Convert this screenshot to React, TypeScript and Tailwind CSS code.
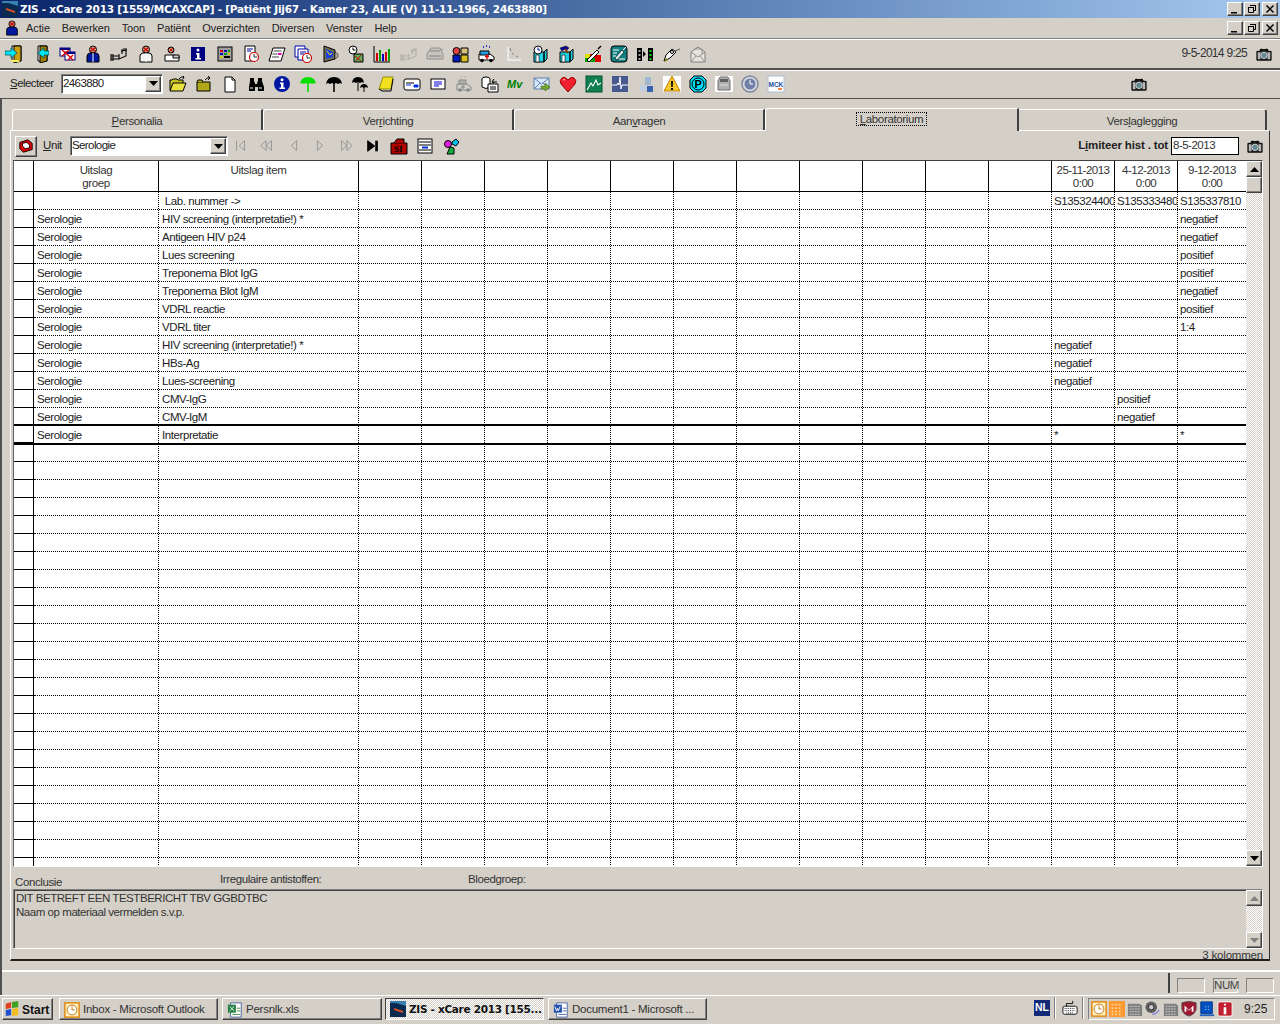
import React from "react";

const raised = "border border-t-white border-l-white border-b-[#404040] border-r-[#404040] shadow-[inset_-1px_-1px_0_#808080]";
const sunken = "border border-t-[#808080] border-l-[#808080] border-b-white border-r-white shadow-[inset_1px_1px_0_#404040]";
const dither = "bg-[conic-gradient(#ffffff_25%,#d4d0c8_0_50%,#ffffff_0_75%,#d4d0c8_0)] bg-[length:2px_2px]";

function S({ children, size = 18 }: { children: React.ReactNode; size?: number }) {
  return (
    <svg width={size} height={size} viewBox="0 0 18 18" className="block shrink-0">
      {children}
    </svg>
  );
}

const Door = ({ flip }: { flip?: boolean }) => (
  <S>
    <path d="M7 1h9v15H7z" fill="#fff" stroke="#000" />
    <path d="M9 1h7v15l-7 2z" fill={flip ? "#a08000" : "#c8a010"} stroke="#000" />
    <path d={flip ? "M18 6h-5V3L7 8l6 5v-3h5z" : "M0 6h6V3l6 5-6 5v-3H0z"} fill="#00e8f8" stroke="#004050" strokeWidth="0.7" />
    {!flip && <path d="M5 15h8l2 2H7z" fill="#f0f060" />}
  </S>
);
const Bed = ({ color = "#000" }: { color?: string }) => (
  <S>
    <path d="M1 9v7M3 9v7M1 11h8M1 14h8M9 9v5L16 11V5l-4 1v3" fill="none" stroke={color} strokeWidth="1.1" />
    <path d="M12 4v3M14 3v3M16 3v3" stroke={color} />
  </S>
);
const Person = ({ body, x }: { body: string; x?: boolean }) => (
  <S>
    <circle cx="9" cy="4.5" r="3.5" fill="#c0a080" stroke="#000" />
    {x && <path d="M6.5 2.5l5 4M11.5 2.5l-5 4" stroke="#d00000" strokeWidth="1.2" />}
    <path d="M3 17V11q0-2.500 3-3h6q3 .5 3 3v6z" fill={body} stroke="#000" />
    <path d="M9 8v9" stroke="#fff" />
  </S>
);
const Clock = ({ cx, cy, r }: { cx: number; cy: number; r: number }) => (
  <g>
    <circle cx={cx} cy={cy} r={r} fill="#fff" stroke="#d00000" strokeWidth="1.2" />
    <path d={`M${cx} ${cy - r + 1.5}V${cy}h${r - 1.5}`} fill="none" stroke="#000" strokeWidth="0.8" />
  </g>
);
const Box = ({ children }: { children: React.ReactNode }) => (
  <S>
    <path d="M3 7h10v10H3zM13 7l3-3v10l-3 3z" fill="#20d0e0" stroke="#000" />
    <path d="M5 10h3v7H5z" fill="#fff" stroke="#000" strokeWidth="0.6" />
    {children}
  </S>
);
const Umbrella = ({ color }: { color: string }) => (
  <S>
    <path d="M1 9q1-7 8-7t8 7l-2-1-2 1-2-1-2 1-2-1-2 1-2-1z" fill={color} />
    <path d="M9 8v9" stroke={color} strokeWidth="1.6" />
  </S>
);
const Cam = () => (
  <S size={16}>
    <path d="M1 6h3l1-2h8l1 2h3v10H1z" fill="#222" stroke="#000" />
    <path d="M5 3h2v2H5zM11 3h2v2h-2z" fill="#000" />
    <path d="M2 7h3v8H2zM13 7h3v8h-3z" fill="#b8b8b8" />
    <circle cx="9" cy="10.500" r="3.600" fill="#608890" stroke="#ddd" />
  </S>
);

const tools1: React.ReactNode[] = [
  <Door />,
  <Door flip />,
  <S><rect x="2" y="3" width="10" height="8" fill="#fff" stroke="#000080" /><rect x="2" y="3" width="10" height="2" fill="#000080" /><rect x="7" y="7" width="10" height="8" fill="#fff" stroke="#000080" /><rect x="7" y="7" width="10" height="2" fill="#000080" /><path d="M4 5l7 6M11 5l-7 6M10 10l5 5M15 10l-5 5" stroke="#e00000" strokeWidth="1.3" /></S>,
  <Person body="#0018a0" x />,
  <Bed />,
  <Person body="#f4f4f4" x />,
  <S><path d="M2 10v6h14v-5l-6-1z" fill="#fff" stroke="#000" /><circle cx="8" cy="5" r="3" fill="#c0a080" stroke="#000" /><path d="M6 3l4 4M10 3l-4 4" stroke="#d00000" /><path d="M10 10h6v3h-6z" fill="#ccc" stroke="#000" /></S>,
  <S><rect x="2" y="2" width="14" height="14" fill="#000080" /><circle cx="9" cy="5" r="1.500" fill="#fff" /><path d="M7 8h3.500v5H12v1.500H6.500V13H8V9.500H7z" fill="#fff" /></S>,
  <S><rect x="2" y="2" width="14" height="14" fill="#a0a0a0" stroke="#000" /><path d="M4 5h3v2H4z" fill="#d00000" /><path d="M8 5h3v2H8zM4 8h3v2H4z" fill="#0000c0" /><path d="M12 5h2v2h-2zM8 8h3v2H8z" fill="#00a000" /><path d="M12 8h2v2h-2zM4 11h3v2H4z" fill="#d0d000" /><path d="M8 11h6v2H8z" fill="#000" /></S>,
  <S><path d="M3 1h10v15H3z" fill="#fff" stroke="#000" /><path d="M5 4h6M5 6h4" stroke="#0000a0" /><Clock cx={12} cy={12} r={4.500} /></S>,
  <S><path d="M5 3h12l-4 13H1z" fill="#fff" stroke="#000" /><path d="M5.500 6h8M4.500 9h5M4 12h7" stroke="#444" /><path d="M10 8h4l-1 2h-3z" fill="#e000c0" /></S>,
  <S><path d="M1 1h10v11H1z" fill="#fff" stroke="#0000a0" /><path d="M4 4h10v11H4z" fill="#fff" stroke="#0000a0" /><path d="M6 7h6M6 9h4" stroke="#0000a0" /><Clock cx={13} cy={13} r={4.500} /></S>,
  <S><path d="M3 1l11 4v9L3 17z" fill="#707050" stroke="#000" /><path d="M5 4l7 3v5l-7 2z" fill="#2040e0" /><path d="M6 6l3 4 2-2" stroke="#f0e000" fill="none" /><path d="M14 7l3 2v3l-3 2z" fill="#aaa" stroke="#000" strokeWidth="0.5" /></S>,
  <S><circle cx="6" cy="5" r="4" fill="#fff" stroke="#000" /><path d="M6 2.500V5h2.500" stroke="#000" fill="none" /><path d="M7 9h9v8H7z" fill="#60b060" stroke="#000" /><path d="M8 11l6 5M14 10l-5 6" stroke="#d00000" /></S>,
  <S><path d="M1 1v16h16" stroke="#000" fill="none" /><path d="M3 8h2v8H3z" fill="#d00000" /><path d="M6 5h2v11H6z" fill="#00a000" /><path d="M9 9h2v7H9z" fill="#0000c0" /><path d="M12 7h2v9h-2z" fill="#d00000" /><path d="M15 4h2v12h-2z" fill="#00a000" /></S>,
  <Bed color="#b0b0a8" />,
  <S><path d="M1 9l4-6h9l3 6v5H1z" fill="#c8c4bc" stroke="#909090" /><path d="M4 6h10M3 11h12" stroke="#808080" /><path d="M15 5l2-1" stroke="#909090" /></S>,
  <S><path d="M1 10h7v7H1z" fill="#0018c0" stroke="#000" /><circle cx="4.500" cy="6" r="3.500" fill="#e04040" stroke="#000" /><path d="M9 10h7v7H9z" fill="#d8c020" stroke="#000" /><path d="M9 3h7v6H9z" fill="#d8c080" stroke="#000" /></S>,
  <S><path d="M1 9h11l4 3v3H1z" fill="#fff" stroke="#000" /><path d="M2 6h9v4H2z" fill="#20a0e0" stroke="#000" /><path d="M9 9v5M7 11.500h4" stroke="#e00000" strokeWidth="1.4" /><circle cx="4" cy="15.500" r="1.800" /><circle cx="13" cy="15.500" r="1.800" /><path d="M5 2h1M8 1h1M11 2h1" stroke="#0000c0" strokeWidth="1.500" /></S>,
  <S><path d="M3 2v13h13" stroke="#fff" fill="none" /><path d="M5 3l1 3M7 8l2 2M11 11l2 1" stroke="#808080" /></S>,
  <Box><circle cx="7" cy="5" r="4" fill="#fff" stroke="#000" /><path d="M7 2.500V5h2" stroke="#00a" fill="none" /></Box>,
  <Box><path d="M3 3l6-2 3 2-2 2-2-1-3 2z" fill="#0000a0" stroke="#000" strokeWidth="0.5" /><path d="M8 4l3 4" stroke="#804000" strokeWidth="2" /></Box>,
  <S><path d="M1 9h5v8H1z" fill="#e0e000" /><path d="M6 9h6v4H6z" fill="#e00000" /><path d="M1 13h10v4H1z" fill="#00a000" /><path d="M11 10h6v7h-6z" fill="#e00000" /><path d="M3 15L13 5l2 2L5 17z" fill="#fff" stroke="#000" /><path d="M14 4l3-3" stroke="#000" strokeWidth="1.500" /></S>,
  <S><rect x="1" y="1" width="16" height="16" rx="3" fill="#108080" stroke="#000" /><path d="M3 5h6M3 8h4M3 11h3M9 14h6" stroke="#fff" /><path d="M5 13l7-8 2 2-7 8z" fill="#e0f0f0" stroke="#000" strokeWidth="0.6" /><path d="M13 5l3-3" stroke="#fff" /></S>,
  <S><rect x="1" y="3" width="5" height="13" fill="#000" /><path d="M2.500 5h2v2h-2zM2.500 9h2v2h-2zM2.500 13h2v2h-2z" fill="#a0a0a0" /><path d="M7 6l3 3-3 3z" fill="#000" /><rect x="12" y="3" width="5" height="13" fill="#000" /><path d="M13.500 5h2v2h-2zM13.500 9h2v2h-2zM13.500 13h2v2h-2z" fill="#00e000" /></S>,
  <S><path d="M1 16l2-6 6-6 4 3-6 6z" fill="#fff" stroke="#000" /><path d="M1 17l2-4 2 2z" fill="#808000" /><circle cx="9" cy="7" r="1.500" fill="none" stroke="#000" /><path d="M12 6l5-2" stroke="#555" /></S>,
  <S><path d="M2 7l7-5 7 5v10H2z" fill="#e8e4dc" stroke="#808080" /><path d="M2 7l7 5 7-5M2 17l5-6M16 17l-5-6M5 4h8v5" fill="none" stroke="#909090" /></S>,
];

const tools2: React.ReactNode[] = [
  <S><path d="M1 15V5h2l1-1h4l1 1h5v3" fill="#c0c020" stroke="#000" /><path d="M1 16l3-8h13l-3 8z" fill="#e8e040" stroke="#000" /><path d="M10 4q2-3 5-2l-1-1M15 2l-1 2" stroke="#000" fill="none" /></S>,
  <S><path d="M2 7h13v9H2z" fill="#b0a818" stroke="#000" /><path d="M2 7l1-2h4l1 2" fill="#b0a818" stroke="#000" /><path d="M10 5q2-3 5-2M13 1l2 2-2 2" stroke="#000" fill="none" /></S>,
  <S><path d="M4 2h7l3 3v12H4z" fill="#fff" stroke="#000" /><path d="M11 2v3h3" fill="none" stroke="#000" /></S>,
  <S><path d="M3 3h4v3l1 2v1h2V8l1-2V3h4v3l2 6v4h-6v-4H8v4H2v-4l1-6z" fill="#000" /><path d="M3 13h3M12 13h3" stroke="#fff" /></S>,
  <S><circle cx="9" cy="9" r="8" fill="#0018a0" /><circle cx="9" cy="4.800" r="1.500" fill="#fff" /><path d="M7 7.500h3.500v5H12V14H6.500v-1.500H8v-3.500H7z" fill="#fff" /></S>,
  <Umbrella color="#00e000" />,
  <Umbrella color="#000" />,
  <S><path d="M1 8q.5-6 6-6t6 6l-2-1-2 1-2-1-2 1-2-1z" fill="#000" /><path d="M7 7v9" stroke="#000" /><path d="M9 13q.5-4 4-4t4 4l-2-1-2 1-2-1z" fill="#000" /><path d="M13 12v5" stroke="#000" /></S>,
  <S><path d="M6 2h10l-2 12H2z" fill="#f0e020" stroke="#909000" /><path d="M2 14l3 2h9l2-12" fill="none" stroke="#000" /></S>,
  <S><rect x="1" y="4" width="16" height="11" rx="2" fill="#fff" stroke="#000" /><path d="M3 8h8" stroke="#000" /><path d="M11 10h4v2h-4zM3 10h5" stroke="#0030e0" fill="#0030e0" /></S>,
  <S><rect x="2" y="4" width="14" height="10" fill="#fff" stroke="#000" /><path d="M5 7h8M5 9h8M5 11h5" stroke="#0000d0" /></S>,
  <S><path d="M2 9h10l4 3v3H2z" fill="#d0d0c8" stroke="#888" /><path d="M4 5h7v4H4z" fill="#b0b0a8" stroke="#888" /><path d="M8 10v4M6 12h4" stroke="#888" /><circle cx="5" cy="15" r="1.800" fill="#888" /><circle cx="13" cy="15" r="1.800" fill="#888" /><path d="M6 2h1M10 2h1" stroke="#888" /></S>,
  <S><ellipse cx="5" cy="4" rx="4" ry="2" fill="#fff" stroke="#000" /><path d="M1 4v8q4 3 8 0V4" fill="#fff" stroke="#000" /><path d="M7 9h10v8H7z" fill="#fff" stroke="#000" /><path d="M9 12h6M9 14h6" stroke="#000" /><path d="M11 7h5M13 4l-2 3 2 1" stroke="#000" fill="none" /></S>,
  <S><text x="0" y="13" fontFamily="Liberation Sans, sans-serif" fontSize="11" fontWeight="700" fontStyle="italic" fill="#008000">Mv</text></S>,
  <S><path d="M1 3h15v11H1z" fill="#d8e8f8" stroke="#6080b0" /><path d="M1 3l7.500 6L16 3M1 14l6-6M16 14l-6-6" fill="none" stroke="#6080b0" /><path d="M8 11h4V8l5 4-5 4v-2H8z" fill="#70a830" stroke="#406018" strokeWidth="0.5" /></S>,
  <S><path d="M9 17L2 9q-2-4 1-6 3-2 6 2 3-4 6-2 3 2 1 6z" fill="#f02030" stroke="#a00000" /><path d="M4 5q1-1 2 0" stroke="#ffc0c0" fill="none" /></S>,
  <S><rect x="1" y="1" width="16" height="16" fill="#108050" stroke="#005030" /><path d="M2 15l4-7 2 3 3-6 2 5 3-2" fill="none" stroke="#fff" strokeWidth="1.100" /></S>,
  <S><rect x="1" y="1" width="16" height="16" fill="#485890" /><path d="M1 10h5l1-2 1 2 1-8 1 12 1-4h6" fill="none" stroke="#fff" /></S>,
  <S><path d="M3 10h6v6H3z" fill="#c0d0e0" /><path d="M8 2h6v8H8z" fill="#a0b8d0" /><path d="M10 11h6v6h-6z" fill="#3860b0" /></S>,
  <S><rect x="0" y="1" width="18" height="16" fill="#fff" /><path d="M9 1l8 15H1z" fill="#f8c830" stroke="#c08000" /><path d="M8 6h2l-.3 6H8.300zM8 13h2v2H8z" fill="#000" /></S>,
  <S><path d="M5 1h8l4 4v8l-4 4H5l-4-4V5z" fill="#00e0f8" stroke="#000" /><circle cx="9" cy="9" r="6" fill="#00e0f8" stroke="#000" /><text x="5.500" y="13" fontFamily="Liberation Sans, sans-serif" fontSize="11" fontWeight="700" fill="#000">P</text></S>,
  <S><rect x="0" y="1" width="18" height="16" fill="#fff" /><path d="M3 6l2-4h8l2 4v9H3z" fill="#b0b0b0" stroke="#707070" /><path d="M5 4h8v3H5z" fill="#606060" /><path d="M5 10h8" stroke="#e0e0e0" /></S>,
  <S><circle cx="9" cy="9" r="8" fill="#d8d8e0" stroke="#8088a0" strokeWidth="1.500" /><circle cx="9" cy="9" r="5.500" fill="#7080a8" /><path d="M9 5v4h3" stroke="#fff" fill="none" /></S>,
  <S><rect x="1" y="1" width="16" height="16" fill="#fff" stroke="#b0c0d8" /><text x="1.500" y="12" fontFamily="Liberation Sans, sans-serif" fontSize="6.500" fontWeight="700" fill="#2050a0">MCK</text><path d="M11 14h4" stroke="#f06000" strokeWidth="1.500" /></S>,
];

const navIcons: React.ReactNode[] = [
  <S size={16}><path d="M4 3v11M13 3L7 8.500l6 5.500z" fill="none" stroke="#909090" /></S>,
  <S size={16}><path d="M8 3L2 8.500 8 14zM14 3L8 8.500l6 5.500z" fill="none" stroke="#909090" /></S>,
  <S size={16}><path d="M12 3L6 8.500l6 5.500z" fill="none" stroke="#909090" /></S>,
  <S size={16}><path d="M6 3l6 5.500L6 14z" fill="none" stroke="#909090" /></S>,
  <S size={16}><path d="M4 3l6 5.500L4 14zM10 3l6 5.500-6 5.500z" fill="none" stroke="#909090" /></S>,
  <S size={16}><path d="M3 3l8 6-8 6z" fill="#000" stroke="#000" /><path d="M13 3v12" stroke="#000" strokeWidth="3" /></S>,
  <S><path d="M1 6h16v11H1z" fill="#b00000" stroke="#000" /><path d="M4 6l3-4h7v4" fill="#b00000" stroke="#000" /><text x="4" y="15" fontFamily="Liberation Serif, serif" fontSize="9" fontWeight="700" fill="#000">SI</text></S>,
  <S><rect x="2" y="2" width="14" height="14" fill="#fff" stroke="#000" /><path d="M3 5h12M3 8h12M3 13h12" stroke="#000" /><path d="M6 10.500h6" stroke="#0030e0" strokeWidth="2" /></S>,
  <S><circle cx="5" cy="7" r="3.500" fill="#e020e0" stroke="#000" /><path d="M9 5l4-3 3 3-3 4-4-2z" fill="#00c0f0" stroke="#000" /><path d="M7 10l4 1v6H4z" fill="#10b040" stroke="#000" /></S>,
];

const tray: React.ReactNode[] = [
  <S size={16}><rect x="1" y="1" width="16" height="16" fill="#fff0c0" stroke="#e08000" strokeWidth="1.500" /><circle cx="9" cy="9" r="5.500" fill="#fff" stroke="#c07000" /><path d="M9 5v4h3" stroke="#c07000" fill="none" /></S>,
  <S size={16}><rect x="0" y="0" width="18" height="18" fill="#ff9a30" /><path d="M3 4h12M3 8h12M3 12h12M3 15h12" stroke="#ffd090" strokeDasharray="2 2" strokeWidth="2" /></S>,
  <S size={16}><path d="M1 3h13l3 2v12H1z" fill="#808080" /><path d="M3 6h11M3 9h11M3 12h11M3 15h11" stroke="#d0d0d0" strokeDasharray="2 1" /></S>,
  <S size={16}><circle cx="7" cy="7" r="6.500" fill="#606060" /><circle cx="7" cy="7" r="3" fill="#d0d0d0" stroke="#222" /><path d="M8 15q5 0 8-5" stroke="#8888e0" fill="none" strokeWidth="1.500" /></S>,
  <S size={16}><path d="M1 3h13l3 2v12H1z" fill="#808080" /><path d="M3 6h11M3 9h11M3 12h11M3 15h11" stroke="#d0d0d0" strokeDasharray="2 1" /></S>,
  <S size={16}><path d="M1 2q8-3 16 0v7q-1 6-8 8-7-2-8-8z" fill="#a01830" stroke="#505050" /><path d="M4 12V5l5 5 5-5v7h-2V8l-3 3-3-3v4z" fill="#fff" /></S>,
  <S size={16}><path d="M2 1h13v13H2z" fill="#0050c0" stroke="#003080" /><path d="M1 15h16v2H1z" fill="#2060c0" /><path d="M7 6h1v1H7zM10 6h1v1h-1zM7 9h1v1H7zM10 9h1v1h-1z" fill="#a0e0ff" /></S>,
  <S size={16}><rect x="1" y="1" width="16" height="16" rx="2" fill="#c02030" stroke="#fff" /><path d="M8 3h2v2H8zM7.500 7h3v8h-3z" fill="#fff" /></S>,
];

const Tb = ({ kind }: { kind: "min" | "res" | "x" }) => (
  <div className={`w-4 h-[14px] bg-[#d4d0c8] ${raised} flex items-center justify-center`}>
    <svg width="10" height="10" viewBox="0 0 10 10">
      {kind === "min" && <path d="M1 8h6v1.500H1z" fill="#000" />}
      {kind === "res" && <path d="M3.500 1.500h5v5h-2M1.500 3.500h5v5h-5zM3 1.500h6M1 3.500h6" fill="none" stroke="#000" />}
      {kind === "x" && <path d="M1.500 1.500l7 7M8.500 1.500l-7 7" stroke="#000" strokeWidth="1.500" />}
    </svg>
  </div>
);

const WinBtns = () => (
  <div className="flex items-center">
    <Tb kind="min" />
    <div className="ml-[1px]"><Tb kind="res" /></div>
    <div className="ml-[2px]"><Tb kind="x" /></div>
  </div>
);

const Arrow = ({ down, grey }: { down?: boolean; grey?: boolean }) => (
  <svg width="9" height="5" viewBox="0 0 9 5">
    <path d={down ? "M0 0h9L4.500 5z" : "M0 5h9L4.500 0z"} fill={grey ? "#808080" : "#000"} />
  </svg>
);

const Combo = ({ value, w }: { value: string; w: string }) => (
  <div className={`${w} h-[20px] bg-white ${sunken} flex items-center pl-[1px] text-[11.5px] tracking-[-0.6px] text-[#222]`}>
    <span className="flex-1">{value}</span>
    <div className={`w-4 h-4 mr-[1px] bg-[#d4d0c8] ${raised} flex items-center justify-center`}>
      <Arrow down />
    </div>
  </div>
);

const colHead = [
  ["25-11-2013", "0:00"],
  ["4-12-2013", "0:00"],
  ["9-12-2013", "0:00"],
];

type R = [string, string, string, string, string];
const data: R[] = [
  ["", "\u00a0Lab. nummer ->", "S135324400", "S135333480", "S135337810"],
  ["Serologie", "HIV screening (interpretatie!) *", "", "", "negatief"],
  ["Serologie", "Antigeen HIV p24", "", "", "negatief"],
  ["Serologie", "Lues screening", "", "", "positief"],
  ["Serologie", "Treponema Blot IgG", "", "", "positief"],
  ["Serologie", "Treponema Blot IgM", "", "", "negatief"],
  ["Serologie", "VDRL reactie", "", "", "positief"],
  ["Serologie", "VDRL titer", "", "", "1:4"],
  ["Serologie", "HIV screening (interpretatie!) *", "negatief", "", ""],
  ["Serologie", "HBs-Ag", "negatief", "", ""],
  ["Serologie", "Lues-screening", "negatief", "", ""],
  ["Serologie", "CMV-IgG", "", "positief", ""],
  ["Serologie", "CMV-IgM", "", "negatief", ""],
  ["Serologie", "Interpretatie", "*", "", "*"],
];
const allRows: R[] = [...data, ...Array.from({ length: 24 }, () => ["", "", "", "", ""] as R)];
const blanks = Array.from({ length: 11 });

function Row({ r, sel }: { r: R; sel: boolean }) {
  const cell = "h-full border-r border-dotted border-r-black pl-[3px] pr-0 pt-[2px] whitespace-nowrap overflow-hidden flex items-center shrink-0";
  return (
    <div className={`flex h-[18px] shrink-0 text-[11.5px] tracking-[-0.42px] text-[#1c1c24] ${sel ? "relative shadow-[0_-2px_0_#000,0_1px_0_#000] border-b border-solid border-b-black" : ""}`}>
      <div className="w-[20px] h-full shrink-0 border-r border-b border-r-black border-b-black" />
      <div className={`flex flex-1 ${sel ? "" : "border-b border-dotted border-b-black"}`}>
        <div className={`${cell} w-[125px]`}>{r[0]}</div>
        <div className={`${cell} w-[200px]`}>{r[1]}</div>
        {blanks.map((_, i) => (
          <div key={i} className={`${cell} w-[63px]`} />
        ))}
        <div className={`${cell} w-[63px] !pl-[2px]`}>{r[2]}</div>
        <div className={`${cell} w-[63px] !pl-[2px]`}>{r[3]}</div>
        <div className={`${cell} flex-1 !border-r-0 !pl-[2px]`}>{r[4]}</div>
      </div>
    </div>
  );
}

const tabCls = "h-[21px] shrink-0 border-t border-l border-t-white border-l-white border-r-2 border-r-[#404040] rounded-tl-[3px] flex items-center justify-center pt-[3px]";

export default function App() {
  return (
    <div className="w-[1280px] h-[1024px] overflow-hidden bg-[#d4d0c8] flex flex-col text-black font-['Liberation_Sans',sans-serif]">
      {/* Title bar */}
      <div className="h-[18px] shrink-0 flex items-center pl-[2px] pr-[2px] bg-gradient-to-r from-[#0a246a] to-[#a6caf0]">
        <svg width="16" height="16" viewBox="0 0 16 16" className="shrink-0">
          <rect width="16" height="16" fill="#0a2a50" />
          <path d="M0 0h16v5L6 2H0z" fill="#3880b0" />
          <path d="M4 7l9 3v2L4 9z" fill="#e05020" />
        </svg>
        <span className="ml-[2px] pt-[1px] flex-1 text-white font-bold text-[10.5px] tracking-[-0.23px] whitespace-nowrap font-['DejaVu_Sans',sans-serif]">
          ZIS - xCare 2013 [1559/MCAXCAP] - [Patiënt Jij67 - Kamer 23, ALIE (V) 11-11-1966, 2463880]
        </span>
        <WinBtns />
      </div>
      {/* Menu */}
      <div className="h-[20px] shrink-0 flex items-center pl-[4px] pr-[2px] text-[11px] tracking-[-0.1px] text-[#222]">
        <S size={16}>
          <circle cx="9" cy="4.500" r="3.500" fill="#c0a080" stroke="#000" />
          <path d="M6.500 2.500l5 4M11.500 2.500l-5 4" stroke="#d00000" strokeWidth="1.200" />
          <path d="M3 17V11q0-2.500 3-3h6q3 .5 3 3v6z" fill="#0018a0" stroke="#000" />
        </S>
        <div className="flex gap-[11.8px] ml-[6px] flex-1">
          {["Actie", "Bewerken", "Toon", "Patiënt", "Overzichten", "Diversen", "Venster", "Help"].map((m) => (
            <span key={m}>{m}</span>
          ))}
        </div>
        <WinBtns />
      </div>
      <div className="h-[2px] shrink-0 border-t border-t-[#808080] border-b border-b-white" />
      {/* Toolbar 1 */}
      <div className="h-[28px] shrink-0 flex items-center pl-[1px] pr-[8px]">
        {tools1.map((t, i) => (
          <div key={i} className="w-[26.3px] flex justify-center">{t}</div>
        ))}
        <span className="ml-auto mr-[9px] mb-[2px] text-[12px] tracking-[-0.7px] text-[#333]">9-5-2014 9:25</span>
        <Cam />
      </div>
      <div className="h-[3px] shrink-0 border-t-2 border-t-[#505050] border-b border-b-white" />
      {/* Toolbar 2 */}
      <div className="h-[27px] shrink-0 flex items-center pl-[10px] pb-[2px]">
        <span className="w-[51px] text-[11.5px] tracking-[-0.55px] text-[#222]"><span className="underline">S</span>electeer</span>
        <Combo value="2463880" w="w-[102px]" />
        <div className="flex ml-[1.500px] items-center">
          {tools2.map((t, i) => (
            <div key={i} className="w-[26px] flex justify-center">{t}</div>
          ))}
        </div>
        <div className="ml-[342px]"><Cam /></div>
      </div>
      {/* MDI area */}
      <div className="flex-1 min-h-0 flex flex-col border-t border-t-[#505050] border-l-2 border-l-[#505050]">
        <div className="h-[873px] shrink-0 pl-[8px] pt-[9px] border-b-2 border-b-white border-double">
          {/* Tabs */}
          <div className="h-[22px] flex items-end pl-[2px] text-[11.5px] tracking-[-0.35px] text-[#333]">
            <div className={`${tabCls} w-[251px]`}><span><span className="underline">P</span>ersonalia</span></div>
            <div className={`${tabCls} w-[251px]`}><span>Ver<span className="underline">r</span>ichting</span></div>
            <div className={`${tabCls} w-[251px]`}><span>Aan<span className="underline">v</span>ragen</span></div>
            <div className="w-[254px] h-[23px] shrink-0 border-t border-l border-t-white border-l-white border-r-2 border-r-[#404040] rounded-tl-[3px] flex justify-center pt-[3px] relative z-10 -mb-[1px] bg-[#d4d0c8]">
              <span className="h-[14px] px-[3px] border border-dotted border-black leading-[12px]"><span className="underline">L</span>aboratorium</span>
            </div>
            <div className="w-[248px] h-[21px] shrink-0 border-t border-t-white border-r-2 border-r-[#404040] rounded-tr-[3px] flex items-center justify-center pt-[3px]">
              <span>Vers<span className="underline">l</span>aglegging</span>
            </div>
          </div>
          {/* Panel */}
          <div className="w-[1260px] h-[831px] border-t border-l border-t-white border-l-white border-r border-b-2 border-r-[#303030] border-b-[#202020] flex flex-col">
            {/* Panel toolbar */}
            <div className="h-[29px] shrink-0 flex items-center pl-[4px] pr-[6px] pt-[1px]">
              <div className={`w-[22px] h-[21px] ${raised} flex items-center justify-center bg-[#d4d0c8]`}>
                <S size={16}><path d="M2 5l9-3 5 4v7l-10 3-4-4z" fill="#e00000" stroke="#000" /><path d="M5 6l5-1 3 3v3l-5 1-3-3z" fill="#fff" stroke="#000" /></S>
              </div>
              <span className="ml-[6px] w-[27px] text-[11.5px] tracking-[-0.4px] text-[#222]"><span className="underline">U</span>nit</span>
              <Combo value="Serologie" w="w-[158px]" />
              <div className="flex items-center">
                {navIcons.map((t, i) => (
                  <div key={i} className="w-[26.300px] flex justify-center">{t}</div>
                ))}
              </div>
              <span className="ml-auto font-bold text-[11.500px] tracking-[-0.15px] text-[#222]"><span>L</span><span className="underline">i</span>miteer hist . tot</span>
              <div className="ml-[3px] w-[68px] h-[18px] bg-white border border-black flex items-center pl-[1px] text-[11.5px] tracking-[-0.5px] text-[#333]">8-5-2013</div>
              <div className="ml-[8px]"><Cam /></div>
            </div>
            {/* Grid */}
            <div className="ml-[2px] w-[1250px] h-[707px] shrink-0 flex border-t border-l border-t-[#404040] border-l-[#606060] border-r border-b border-r-white border-b-white">
              <div className="w-[1233px] bg-white flex flex-col overflow-hidden">
                <div className="flex h-[31px] shrink-0 border-b border-b-black text-[11.500px] tracking-[-0.35px] leading-[13px] text-[#333] text-center">
                  <div className="w-[20px] border-r border-r-black" />
                  <div className="w-[125px] border-r border-r-black pt-[3px] shrink-0">Uitslag<br />groep</div>
                  <div className="w-[200px] border-r border-r-black pt-[3px] shrink-0">Uitslag item</div>
                  {blanks.map((_, i) => (
                    <div key={i} className="w-[63px] border-r border-r-black shrink-0" />
                  ))}
                  {colHead.map((c, i) => (
                    <div key={i} className={`${i === 2 ? "flex-1" : "w-[63px] border-r border-r-black"} pt-[3px] shrink-0 whitespace-nowrap tracking-[-0.5px]`}>{c[0]}<br />{c[1]}</div>
                  ))}
                </div>
                {allRows.map((r, i) => (
                  <Row key={i} r={r} sel={i === 13} />
                ))}
              </div>
              {/* Scrollbar */}
              <div className="w-[16px] flex flex-col">
                <div className={`h-[16px] ${raised} bg-[#d4d0c8] flex items-center justify-center shrink-0`}><Arrow /></div>
                <div className={`h-[16px] ${raised} bg-[#d4d0c8] shrink-0`} />
                <div className={`flex-1 ${dither}`} />
                <div className={`h-[16px] ${raised} bg-[#d4d0c8] flex items-center justify-center shrink-0`}><Arrow down /></div>
              </div>
            </div>
            {/* Labels */}
            <div className="h-[22px] shrink-0 flex text-[11.500px] tracking-[-0.4px] text-[#333]">
              <span className="pl-[4px] pt-[7px] w-[209px]">Conclusie</span>
              <span className="pt-[4px] w-[248px]">Irregulaire antistoffen:</span>
              <span className="pt-[4px]">Bloedgroep:</span>
            </div>
            {/* Conclusion */}
            <div className={`ml-[2px] w-[1250px] h-[60px] shrink-0 flex ${sunken}`}>
              <div className="flex-1 pl-[2px] pt-[2px] text-[11.500px] tracking-[-0.45px] leading-[13.500px] text-[#333]">
                <div>DIT BETREFT EEN TESTBERICHT TBV GGBDTBC</div>
                <div>Naam op materiaal vermelden s.v.p.</div>
              </div>
              <div className="w-[16px] flex flex-col">
                <div className={`h-[16px] ${raised} bg-[#d4d0c8] flex items-center justify-center shrink-0`}><Arrow grey /></div>
                <div className={`flex-1 ${dither}`} />
                <div className={`h-[16px] ${raised} bg-[#d4d0c8] flex items-center justify-center shrink-0`}><Arrow down grey /></div>
              </div>
            </div>
            <div className="h-[13px] shrink-0 text-right pr-[6px] text-[11.500px] leading-[12px] tracking-[-0.2px] text-[#333]">3 kolommen</div>
          </div>
        </div>
        {/* Status bar */}
        <div className="h-[21px] shrink-0 flex items-stretch pt-[1px]">
          <div className="ml-[1166px] w-[2px] bg-[#404040]" />
          <div className="flex gap-[8px] ml-[7px] mt-[5px] h-[15px]">
            <div className="w-[28px] border border-t-[#808080] border-l-[#808080] border-b-white border-r-white" />
            <div className="w-[25px] border border-t-[#808080] border-l-[#808080] border-b-white border-r-white text-[11.500px] tracking-[-0.4px] leading-[13px] text-center text-[#444]">NUM</div>
            <div className="w-[28px] border border-t-[#808080] border-l-[#808080] border-b-white border-r-white" />
          </div>
        </div>
      </div>
      {/* Taskbar */}
      <div className="h-[29px] shrink-0 border-t border-t-white pt-[2px] pl-[2px] flex items-start">
        <div className={`w-[51px] h-[22px] ${raised} flex items-center pl-[1px] font-bold text-[12px] text-[#111]`}>
          <S size={16}><path d="M2 3l6-2v7l-6 1z" fill="#e04020" /><path d="M9 1l7-1v7l-7 1z" fill="#40a020" /><path d="M2 10l6-1v7l-6 1z" fill="#2050d0" /><path d="M9 9l7-1v8l-7 1z" fill="#f0c020" /></S>
          <span className="ml-[2px] pt-[1px]">Start</span>
        </div>
        <div className={`ml-[6px] w-[159px] h-[22px] ${raised} flex items-center pl-[4px] pt-[1px] text-[11.500px] tracking-[-0.25px] text-[#333]`}>
          <S size={16}><rect x="1" y="1" width="16" height="16" fill="#fff0c0" stroke="#e08000" strokeWidth="1.500" /><circle cx="9" cy="9" r="5.500" fill="#fff" stroke="#c07000" /><path d="M9 5v4h3" stroke="#c07000" fill="none" /></S>
          <span className="ml-[3px]">Inbox - Microsoft Outlook</span>
        </div>
        <div className={`ml-[4px] w-[160px] h-[22px] ${raised} flex items-center pl-[4px] pt-[1px] text-[11.500px] tracking-[-0.25px] text-[#333]`}>
          <S size={16}><path d="M4 1h12v16H4z" fill="#fff" stroke="#4060a0" /><path d="M1 3h9v9H1z" fill="#208040" /><path d="M3 5l5 5M8 5l-5 5" stroke="#fff" /><path d="M11 7h4M11 10h4M6 14h9" stroke="#408040" /></S>
          <span className="ml-[3px]">Persnlk.xls</span>
        </div>
        <div className={`ml-[3px] w-[159px] h-[22px] border border-t-[#404040] border-l-[#404040] border-b-white border-r-white ${dither} flex items-center pl-[4px] font-bold text-[11.500px] text-[#111] font-['DejaVu_Sans',sans-serif]`}>
          <svg width="16" height="16" viewBox="0 0 16 16" className="shrink-0">
            <rect width="16" height="16" fill="#0a2a50" />
            <path d="M0 0h16v5L6 2H0z" fill="#3880b0" />
            <path d="M4 7l9 3v2L4 9z" fill="#e05020" />
          </svg>
          <span className="ml-[3px] pt-[2px] whitespace-nowrap text-[10.5px] tracking-[-0.3px]">ZIS - xCare 2013 [155...</span>
        </div>
        <div className={`ml-[4px] w-[159px] h-[22px] ${raised} flex items-center pl-[4px] pt-[1px] text-[11.500px] tracking-[-0.25px] text-[#333]`}>
          <S size={16}><path d="M4 1h12v16H4z" fill="#fff" stroke="#4060a0" /><path d="M1 3h9v9H1z" fill="#2050b0" /><path d="M2 5l2 5 1-3 1 3 2-5" stroke="#fff" fill="none" /><path d="M11 7h4M11 10h4M6 14h9" stroke="#4060a0" /></S>
          <span className="ml-[3px] whitespace-nowrap">Document1 - Microsoft ...</span>
        </div>
        <div className="ml-[327px] mt-[2px] w-[16px] h-[16px] bg-[#102a78] text-white text-[10.500px] font-bold flex items-center justify-center shrink-0">NL</div>
        <div className="ml-[4px] mt-[-1px] w-[2px] h-[22px] border-l border-l-[#808080] border-r border-r-white" />
        <div className="ml-[6px] mt-[2px]">
          <S size={16}><rect x="1" y="7" width="16" height="9" rx="2" fill="#fff" stroke="#000" /><path d="M3 9.500h12M3 12h12M5 14.500h8" stroke="#000" strokeDasharray="1 1" /><path d="M5 7V4h7V1" fill="none" stroke="#000" /></S>
        </div>
        <div className="ml-[4px] mt-[-1px] w-[2px] h-[22px] border-l border-l-[#808080] border-r border-r-white" />
        <div className="ml-[4px] w-[187px] h-[22px] border border-t-[#808080] border-l-[#808080] border-b-white border-r-white flex items-center pl-[2px] text-[12px] text-[#222]">
          <div className="flex gap-[2px]">
            {tray.map((t, i) => <div key={i}>{t}</div>)}
          </div>
          <span className="ml-[11px]">9:25</span>
        </div>
      </div>
    </div>
  );
}
